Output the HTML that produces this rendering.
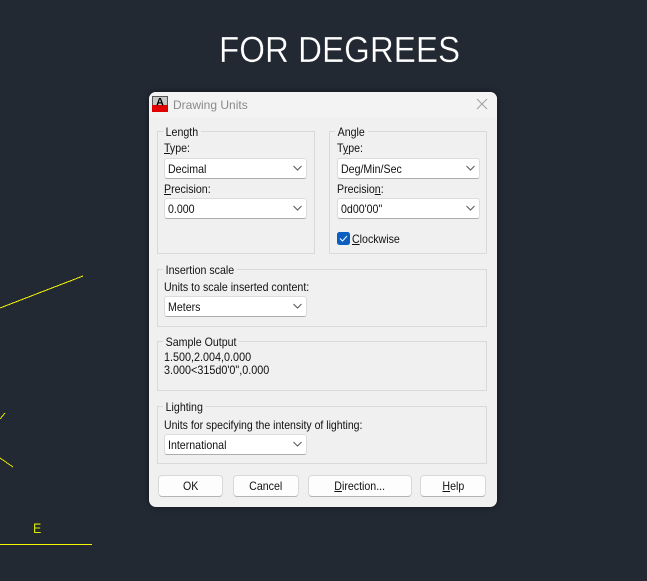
<!DOCTYPE html>
<html><head><meta charset="utf-8"><style>
html,body{margin:0;padding:0}
body{width:647px;height:581px;background:#222933;overflow:hidden;position:relative;font-family:"Liberation Sans",sans-serif;font-size:12px;color:#111}
.a{position:absolute;white-space:nowrap;line-height:14px;transform:scaleX(.885);transform-origin:0 0}
.n{transform:none}
#t{left:219px;top:29px;font-size:36px;line-height:42px;color:#fff;transform:scaleX(.92);-webkit-text-stroke:.35px #222933}
#d{position:absolute;left:149px;top:92px;width:348px;height:415px;background:#f0f0f0;border-radius:7px;box-shadow:0 0 6px rgba(0,0,0,.5)}
#tb{position:absolute;left:149px;top:92px;width:348px;height:25px;background:#f3f3f3;border-radius:7px 7px 0 0}
.g{position:absolute;border:1px solid #d9d9d9;box-sizing:border-box}
.l{background:#f0f0f0;padding:0 3px}
.c{position:absolute;box-sizing:border-box;background:#fff;border:1px solid #dcdcdc;border-bottom:1px solid #adadad;border-radius:3px;height:21px;line-height:20px;padding-left:3px}
.c span{display:inline-block;transform:scaleX(.885);transform-origin:0 0}
.c svg{position:absolute;right:3px;top:6px}
.b{position:absolute;top:475px;height:22px;box-sizing:border-box;background:#fdfdfd;border:1px solid #d8d8d8;border-bottom:1px solid #b4b4b4;border-radius:4px;text-align:center;line-height:21px}
.b span{display:inline-block;transform:scaleX(.885)}
u{text-decoration:underline}
</style></head><body>
<div class="a" id="t">FOR DEGREES</div>
<svg class="a n" style="left:0;top:0" width="647" height="581" shape-rendering="crispEdges">
<path d="M0 308L83 276" stroke="#f5f500" fill="none"/>
<path d="M0 419L5 413M0 458L13 467" stroke="#e4e400" fill="none"/>
<rect x="0" y="544" width="92" height="1" fill="#f5f500"/>
</svg>
<div class="a" style="left:33px;top:521px;font-size:14px;color:#d8e800">E</div>
<div id="d"></div><div id="tb"></div>
<svg class="a n" style="left:152px;top:96px" width="16" height="16">
<rect x="0" y="0" width="16" height="16" fill="#e00000"/>
<rect x="0" y="0" width="16" height="9" fill="#c8c8c8"/>
<path d="M0 .5H15.500V9M.5 0V9" stroke="#555" fill="none"/>
<text x="4" y="9.500" font-size="11" font-weight="bold" fill="#000" font-family="Liberation Sans">A</text>
</svg>
<div class="a n" style="left:173px;top:98px;color:#8a8a8a">Drawing Units</div>
<svg class="a n" style="left:476px;top:98px" width="12" height="12"><path d="M1 1L11 11M11 1L1 11" stroke="#a0a0a0" fill="none"/></svg>

<div class="g" style="left:157px;top:131px;width:158px;height:123px"></div>
<div class="a l" style="left:163px;top:125px">Length</div>
<div class="a" style="left:164px;top:141px"><u>T</u>ype:</div>
<div class="c" style="left:164px;top:158px;width:143px"><span>Decimal</span><svg width="10" height="8"><path d="M.5 1L4.500 5L8.500 1" stroke="#555" fill="none"/></svg></div>
<div class="a" style="left:164px;top:182px"><u>P</u>recision:</div>
<div class="c" style="left:164px;top:198px;width:143px"><span>0.000</span><svg width="10" height="8"><path d="M.5 1L4.500 5L8.500 1" stroke="#555" fill="none"/></svg></div>

<div class="g" style="left:329px;top:131px;width:158px;height:123px"></div>
<div class="a l" style="left:335px;top:125px">Angle</div>
<div class="a" style="left:337px;top:141px">T<u>y</u>pe:</div>
<div class="c" style="left:337px;top:158px;width:143px"><span>Deg/Min/Sec</span><svg width="10" height="8"><path d="M.5 1L4.500 5L8.500 1" stroke="#555" fill="none"/></svg></div>
<div class="a" style="left:337px;top:182px">Precisio<u>n</u>:</div>
<div class="c" style="left:337px;top:198px;width:143px"><span>0d00'00"</span><svg width="10" height="8"><path d="M.5 1L4.500 5L8.500 1" stroke="#555" fill="none"/></svg></div>
<svg class="a n" style="left:337px;top:232px" width="13" height="13"><rect width="13" height="13" rx="2.500" fill="#0a5fc0"/><path d="M3 6.500L5.500 9L10 4" stroke="#fff" fill="none"/></svg>
<div class="a" style="left:352px;top:232px"><u>C</u>lockwise</div>

<div class="g" style="left:157px;top:269px;width:330px;height:58px"></div>
<div class="a l" style="left:163px;top:263px">Insertion scale</div>
<div class="a" style="left:164px;top:280px">Units to scale inserted content:</div>
<div class="c" style="left:164px;top:296px;width:143px"><span>Meters</span><svg width="10" height="8"><path d="M.5 1L4.500 5L8.500 1" stroke="#555" fill="none"/></svg></div>

<div class="g" style="left:157px;top:341px;width:330px;height:50px"></div>
<div class="a l" style="left:163px;top:335px">Sample Output</div>
<div class="a" style="left:164px;top:351px;line-height:13px;transform:scaleX(.9)">1.500,2.004,0.000<br>3.000&lt;315d0'0",0.000</div>

<div class="g" style="left:157px;top:406px;width:330px;height:58px"></div>
<div class="a l" style="left:163px;top:400px">Lighting</div>
<div class="a" style="left:164px;top:418px;transform:scaleX(.875)">Units for specifying the intensity of lighting:</div>
<div class="c" style="left:164px;top:434px;width:143px"><span>International</span><svg width="10" height="8"><path d="M.5 1L4.500 5L8.500 1" stroke="#555" fill="none"/></svg></div>

<div class="b" style="left:158px;width:65px"><span>OK</span></div>
<div class="b" style="left:233px;width:66px"><span>Cancel</span></div>
<div class="b" style="left:308px;width:104px"><span><u>D</u>irection...</span></div>
<div class="b" style="left:420px;width:66px"><span><u>H</u>elp</span></div>
</body></html>
